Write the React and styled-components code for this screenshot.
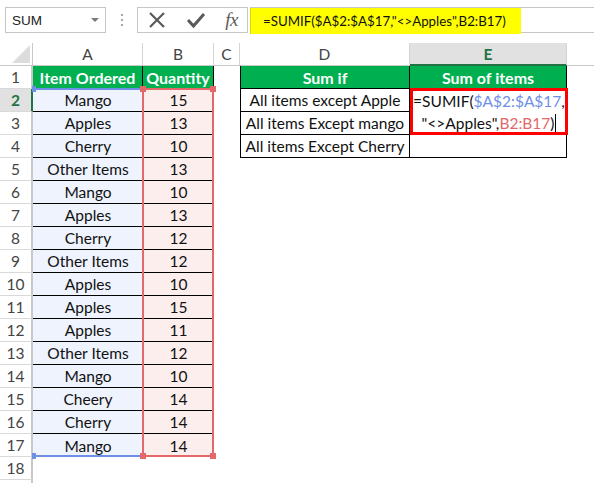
import styled, { createGlobalStyle } from 'styled-components';

const GlobalStyle = createGlobalStyle`
  html, body { margin: 0; padding: 0; background: #ffffff; }
  body { font-family: Lato, "Liberation Sans", sans-serif; color: #000; overflow: hidden; }
`;

const GREEN = '#00b050';
const XL_GREEN = '#217346';
const BLUE = '#6d8fe6';
const RED = '#e4676a';

const items = [
    ['Mango', 15],
    ['Apples', 13],
    ['Cherry', 10],
    ['Other Items', 13],
    ['Mango', 10],
    ['Apples', 13],
    ['Cherry', 12],
    ['Other Items', 12],
    ['Apples', 10],
    ['Apples', 15],
    ['Apples', 11],
    ['Other Items', 12],
    ['Mango', 10],
    ['Cheery', 14],
    ['Cherry', 14],
    ['Mango', 14],
];

const sumIfRows = ['All items except Apple', 'All items Except mango', 'All items Except Cherry'];

const columns = ['A', 'B', 'C', 'D', 'E', ''];

// sheet row n sits on grid row n + 1 (grid row 1 holds the column letters)
export default function App() {
    return (
        <>
            <GlobalStyle />
            <Page>
                <Toolbar>
                    <NameBox>
                        <span>SUM</span>
                        <DropArrow />
                    </NameBox>
                    <Grip>
                        <i />
                        <i />
                        <i />
                    </Grip>
                    <IconBox>
                        <svg width="18" height="18" viewBox="0 0 18 18">
                            <path d="M2 2 L16 16 M16 2 L2 16" stroke="#5a5a5a" strokeWidth="2.2" fill="none" />
                        </svg>
                        <svg width="20" height="18" viewBox="0 0 20 18">
                            <path d="M2 9 L7.5 15 L18 3" stroke="#5a5a5a" strokeWidth="3" fill="none" />
                        </svg>
                        <Fx>fx</Fx>
                    </IconBox>
                    <FormulaBar>
                        <FormulaText>=SUMIF($A$2:$A$17,"&lt;&gt;Apples",B2:B17)</FormulaText>
                    </FormulaBar>
                </Toolbar>

                <Sheet>
                    <Corner>
                        <svg width="18" height="18" viewBox="0 0 18 18">
                            <path d="M18 0 L18 18 L0 18 Z" fill="#dcdcdc" />
                        </svg>
                    </Corner>
                    {columns.map((c, i) => (
                        <ColHead key={i} $c={i + 2} $active={c === 'E'} $last={c === ''}>
                            {c}
                        </ColHead>
                    ))}

                    {Array.from({ length: 19 }).map((_, i) => (
                        <RowHead key={`h${i}`} $r={i + 2} $active={i + 1 === 2}>
                            {i < 18 ? i + 1 : ''}
                        </RowHead>
                    ))}

                    <Cell $c={2} $r={2} $fill={GREEN} $head $right>Item Ordered</Cell>
                    <Cell $c={3} $r={2} $fill={GREEN} $head $right>Quantity</Cell>
                    <Cell $c={5} $r={2} $fill={GREEN} $head $box $left>Sum if</Cell>
                    <Cell $c={6} $r={2} $fill={GREEN} $head $box>Sum of items</Cell>

                    {items.map(([name, qty], i) => {
                        const row = i + 2;
                        return [
                            <Cell key={`a${row}`} $c={2} $r={row + 1} $fill="#eef3fd" $line={row < 17}>
                                {name}
                            </Cell>,
                            <Cell key={`b${row}`} $c={3} $r={row + 1} $fill="#fdeeee" $line={row < 17}>
                                {qty}
                            </Cell>,
                        ];
                    })}

                    {sumIfRows.map((text, i) => (
                        <Cell key={`d${i}`} $c={5} $r={i + 3} $box $left>
                            {text}
                        </Cell>
                    ))}
                    <Cell $c={6} $r={5} $box />

                    <EditCell>
                        <span>
                            =SUMIF(<Ref $color={BLUE}>$A$2:$A$17</Ref>,
                        </span>
                        <span>
                            "&lt;&gt;Apples",<Ref $color={RED}>B2:B17</Ref>)<Caret />
                        </span>
                    </EditCell>

                    <RangeBox $c={2} $color={BLUE} $sidesOff>
                        <Handle $color={BLUE} $small $top $leftSide />
                        <Handle $color={BLUE} $small $leftSide />
                    </RangeBox>
                    <RangeBox $c={3} $color={RED}>
                        <Handle $color={RED} $top $leftSide />
                        <Handle $color={RED} $top />
                        <Handle $color={RED} $leftSide />
                        <Handle $color={RED} />
                    </RangeBox>
                </Sheet>
            </Page>
        </>
    );
}

const Page = styled.div`
    width: 594px;
    height: 483px;
    overflow: hidden;
    background: #ffffff;
`;

const Toolbar = styled.div`
    height: 43px;
    box-sizing: border-box;
    padding-top: 7px;
    display: flex;
    align-items: flex-start;
`;

const NameBox = styled.div`
    margin-left: 5px;
    width: 101px;
    height: 26px;
    box-sizing: border-box;
    border: 1px solid #c6c6c6;
    display: flex;
    align-items: center;
    justify-content: space-between;
    padding: 0 6px 0 6px;
    font-family: "Liberation Sans", Arial, sans-serif;
    font-size: 13.5px;
    color: #222;
`;

const DropArrow = styled.span`
    width: 0;
    height: 0;
    border-left: 4px solid transparent;
    border-right: 4px solid transparent;
    border-top: 4px solid #7a7a7a;
`;

const Grip = styled.div`
    width: 31px;
    height: 26px;
    display: flex;
    flex-direction: column;
    align-items: center;
    justify-content: center;
    gap: 3px;

    i {
        display: block;
        width: 2px;
        height: 2px;
        background: #a8a8a8;
    }
`;

const IconBox = styled.div`
    width: 111px;
    height: 26px;
    box-sizing: border-box;
    border: 1px solid #c6c6c6;
    display: flex;
    align-items: center;
    justify-content: space-between;
    padding: 0 9px 0 10px;
`;

const Fx = styled.span`
    font-family: "Liberation Serif", "Times New Roman", serif;
    font-style: italic;
    font-size: 19px;
    color: #5a5a5a;
    letter-spacing: -0.5px;
    line-height: 1;
    margin-top: -2px;
`;

const FormulaBar = styled.div`
    flex: 1;
    margin-left: 2px;
    height: 26px;
    box-sizing: border-box;
    border-top: 1px solid #c6c6c6;
    border-bottom: 1px solid #c6c6c6;
    display: flex;
`;

const FormulaText = styled.div`
    width: 271px;
    height: 26px;
    box-sizing: border-box;
    background: #ffff00;
    border-left: 1px solid #e0d800;
    padding-left: 12px;
    display: flex;
    align-items: center;
    font-family: Lato, "Liberation Sans", sans-serif;
    font-size: 13.3px;
    color: #111;
    white-space: nowrap;
`;

const Sheet = styled.div`
    display: grid;
    grid-template-columns: 33px 110px 71px 26px 170px 157px 1fr;
    grid-template-rows: repeat(20, 23px);
    font-size: 15.5px;
`;

const Corner = styled.div`
    grid-column: 1;
    grid-row: 1;
    box-sizing: border-box;
    border-right: 1px solid #c8c8c8;
    border-bottom: 1px solid #c8c8c8;
    display: flex;
    align-items: flex-end;
    justify-content: flex-end;
    padding: 0 2px 2px 0;
`;

const ColHead = styled.div`
    grid-column: ${({ $c }) => $c};
    grid-row: 1;
    box-sizing: border-box;
    display: flex;
    align-items: center;
    justify-content: center;
    border-right: ${({ $last }) => ($last ? 'none' : '1px solid #d4d4d4')};
    border-bottom: ${({ $active }) => ($active ? `2px solid ${XL_GREEN}` : '1px solid #c8c8c8')};
    background: ${({ $active }) => ($active ? '#e1e1e1' : '#ffffff')};
    color: ${({ $active }) => ($active ? XL_GREEN : '#444444')};
    font-weight: ${({ $active }) => ($active ? 700 : 400)};
    font-size: 15.5px;
`;

const RowHead = styled.div`
    grid-column: 1;
    grid-row: ${({ $r }) => $r};
    box-sizing: border-box;
    display: flex;
    align-items: center;
    justify-content: center;
    border-bottom: 1px solid #d9d9d9;
    border-right: ${({ $active }) => ($active ? `2px solid ${XL_GREEN}` : '2px solid #c8c8c8')};
    background: ${({ $active }) => ($active ? '#e1e1e1' : '#ffffff')};
    color: ${({ $active }) => ($active ? XL_GREEN : '#444444')};
    font-weight: ${({ $active }) => ($active ? 700 : 400)};
    font-size: 15.5px;
`;

const Cell = styled.div`
    grid-column: ${({ $c }) => $c};
    grid-row: ${({ $r }) => $r};
    box-sizing: border-box;
    display: flex;
    align-items: center;
    justify-content: center;
    white-space: nowrap;
    background: ${({ $fill }) => $fill || 'transparent'};
    color: ${({ $head }) => ($head ? '#ffffff' : '#111111')};
    font-weight: ${({ $head }) => ($head ? 700 : 400)};
    font-size: ${({ $head }) => ($head ? '16px' : '15.5px')};
    border-bottom: ${({ $line, $box }) => ($line || $box ? '1px solid #000' : 'none')};
    border-right: ${({ $right, $box }) => ($right || $box ? '1px solid #000' : 'none')};
    border-left: ${({ $left }) => ($left ? '1px solid #000' : 'none')};
`;

const EditCell = styled.div`
    grid-column: 6;
    grid-row: 3 / 5;
    margin: -1px -1px 0 0;
    box-sizing: border-box;
    border: 3px solid #ff0000;
    background: #ffffff;
    display: flex;
    flex-direction: column;
    align-items: center;
    justify-content: center;
    font-size: 15.5px;
    line-height: 22px;
    color: #111;
    white-space: nowrap;
    z-index: 2;

    span {
        display: flex;
        align-items: center;
    }
`;

const Ref = styled.span`
    color: ${({ $color }) => $color};
`;

const Caret = styled.i`
    display: inline-block;
    width: 1px;
    height: 18px;
    margin-left: 1px;
    background: #000;
`;

const RangeBox = styled.div`
    grid-column: ${({ $c }) => $c};
    grid-row: 3 / 19;
    position: relative;
    box-sizing: border-box;
    margin: -1px 0 0 ${({ $sidesOff }) => ($sidesOff ? '0' : '-1px')};
    border: 2px solid ${({ $color }) => $color};
    ${({ $sidesOff }) => ($sidesOff ? 'border-left: none; border-right: none;' : '')}
    pointer-events: none;
    z-index: 1;
`;

const Handle = styled.span`
    position: absolute;
    width: ${({ $small }) => ($small ? '4px' : '6px')};
    height: 6px;
    background: ${({ $color }) => $color};
    ${({ $top }) => ($top ? 'top: -4px;' : 'bottom: -4px;')}
    ${({ $leftSide, $small }) => ($leftSide ? `left: ${$small ? '-1px' : '-4px'};` : 'right: -4px;')}
`;
